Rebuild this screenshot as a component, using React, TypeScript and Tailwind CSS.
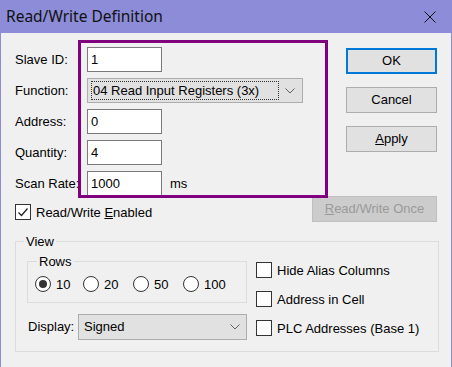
import React from 'react'

function TextBox({ value, width = 'w-[75px]' }: { value: string; width?: string }) {
  return (
    <div className={`${width} h-[25px] border border-[#7a7a7a] bg-white flex items-center px-[3px] text-[13px] text-black`}>
      {value}
    </div>
  )
}

function Chevron() {
  return (
    <svg width="10" height="6" viewBox="0 0 10 6" className="shrink-0">
      <path d="M0.5 0.5 L5 5 L9.5 0.5" fill="none" stroke="#606060" strokeWidth="1" />
    </svg>
  )
}

function Button({ children, focused, disabled, width = 'w-[91px]' }: { children: React.ReactNode; focused?: boolean; disabled?: boolean; width?: string }) {
  const look = disabled
    ? 'bg-[#cccccc] border border-[#bfbfbf] text-[#9a9a9a]'
    : focused
    ? 'bg-[#e1e1e1] border-2 border-[#0078d7] text-black'
    : 'bg-[#e1e1e1] border border-[#adadad] text-black'
  return (
    <div className={`${width} h-[26px] flex items-center justify-center text-[13px] ${look}`}>{children}</div>
  )
}

function CheckBox({ label, checked }: { label: React.ReactNode; checked?: boolean }) {
  return (
    <div className="flex items-center gap-[5px] h-[16px]">
      <div className="w-[16px] h-[16px] border border-[#333333] bg-white flex items-center justify-center">
        {checked && (
          <svg width="12" height="12" viewBox="0 0 12 12">
            <path d="M1.5 6.5 L4.5 9.5 L10.5 2.5" fill="none" stroke="#222" strokeWidth="1.3" />
          </svg>
        )}
      </div>
      <span className="text-[13px] leading-[15px]">{label}</span>
    </div>
  )
}

function Radio({ label, checked, width }: { label: string; checked?: boolean; width: string }) {
  return (
    <div className={`flex items-center gap-[5px] h-[16px] ${width}`}>
      <div className="w-[16px] h-[16px] rounded-full border border-[#333333] bg-white flex items-center justify-center">
        {checked && <div className="w-[8px] h-[8px] rounded-full bg-[#333333]" />}
      </div>
      <span className="text-[13px] leading-[15px]">{label}</span>
    </div>
  )
}

export default function App() {
  const rows = [
    { label: 'Slave ID:', value: '1' },
    { label: 'Address:', value: '0' },
    { label: 'Quantity:', value: '4' },
  ]

  return (
    <div className="w-[452px] h-[367px] flex flex-col bg-[#f0f0f0] text-black font-['Liberation_Sans',Arial,sans-serif] overflow-hidden">
      {/* title bar */}
      <div className="h-[33px] shrink-0 bg-[#8c8cd8] flex items-center pl-[6px] pr-[16px]">
        <span className="text-[15.5px] font-['Noto_Sans',sans-serif] text-[#111]">Read/Write Definition</span>
        <svg width="12" height="12" viewBox="0 0 12 12" className="ml-auto mt-[1px]">
          <path d="M0.5 0.5 L11.5 11.5 M11.5 0.5 L0.5 11.5" stroke="#111" strokeWidth="1" />
        </svg>
      </div>

      <div className="relative flex-1 border-x border-[#8c8cd8] px-[14px] pt-[14px]">
        <div className="flex">
          <div className="flex flex-col gap-[6px]">
            <div className="flex items-center h-[25px]">
              <span className="w-[72px] text-[13px]">{rows[0].label}</span>
              <TextBox value={rows[0].value} />
            </div>
            <div className="flex items-center h-[25px]">
              <span className="w-[72px] text-[13px]">Function:</span>
              <div className="w-[216px] h-[25px] bg-[#e1e1e1] border border-[#adadad] flex items-center pl-[3px] pr-[6px]">
                <div className="w-[188px] h-[19px] border border-dotted border-[#333] flex items-center pl-[1px] text-[13px]">
                  04 Read Input Registers (3x)
                </div>
                <div className="ml-auto mr-[1px]">
                  <Chevron />
                </div>
              </div>
            </div>
            {rows.slice(1).map((r) => (
              <div key={r.label} className="flex items-center h-[25px]">
                <span className="w-[72px] text-[13px]">{r.label}</span>
                <TextBox value={r.value} />
              </div>
            ))}
            <div className="flex items-center h-[25px]">
              <span className="w-[72px] text-[13px]">Scan Rate:</span>
              <TextBox value="1000" />
              <span className="ml-[8px] text-[13px]">ms</span>
            </div>
          </div>

          <div className="ml-auto flex flex-col gap-[13px] pt-[1px]">
            <Button focused>OK</Button>
            <Button>Cancel</Button>
            <Button>
              <span><span className="underline">A</span>pply</span>
            </Button>
          </div>
        </div>

        <div className="flex items-start justify-between h-[26px]">
          <div className="pt-[8px]">
            <CheckBox checked label={<>Read/Write <span className="underline">E</span>nabled</>} />
          </div>
          <Button disabled width="w-[125px]">
            <span><span className="underline">R</span>ead/Write Once</span>
          </Button>
        </div>

        <fieldset className="mt-[12px] w-[424px] border border-[#dcdcdc]">
          <legend className="ml-[8px] px-[2px] text-[13px] leading-[15px]">View</legend>
          <div className="flex pl-[11px] pb-[11px]">
            <div className="w-[220px] flex flex-col pt-[5px]">
              <fieldset className="border border-[#dcdcdc]">
                <legend className="ml-[9px] px-[2px] text-[13px] leading-[15px]">Rows</legend>
                <div className="flex items-center pl-[7px] pt-[7px] pb-[10px]">
                  <Radio label="10" checked width="w-[48px]" />
                  <Radio label="20" width="w-[50px]" />
                  <Radio label="50" width="w-[50px]" />
                  <Radio label="100" width="w-[50px]" />
                </div>
              </fieldset>
              <div className="flex items-center h-[26px] mt-[11px] pl-[1px]">
                <span className="w-[50px] text-[13px]">Display:</span>
                <div className="flex-1 h-[26px] bg-[#e1e1e1] border border-[#adadad] flex items-center pl-[5px] pr-[6px] text-[13px]">
                  Signed
                  <div className="ml-auto">
                    <Chevron />
                  </div>
                </div>
              </div>
            </div>
            <div className="ml-[9px] pt-[13px] flex flex-col gap-[13px]">
              <CheckBox label="Hide Alias Columns" />
              <CheckBox label="Address in Cell" />
              <CheckBox label="PLC Addresses (Base 1)" />
            </div>
          </div>
        </fieldset>

        {/* annotation overlay */}
        <div className="absolute left-[77px] top-[7px] w-[250px] h-[158px] border-[3px] border-[#800080] pointer-events-none" />
      </div>
    </div>
  )
}
